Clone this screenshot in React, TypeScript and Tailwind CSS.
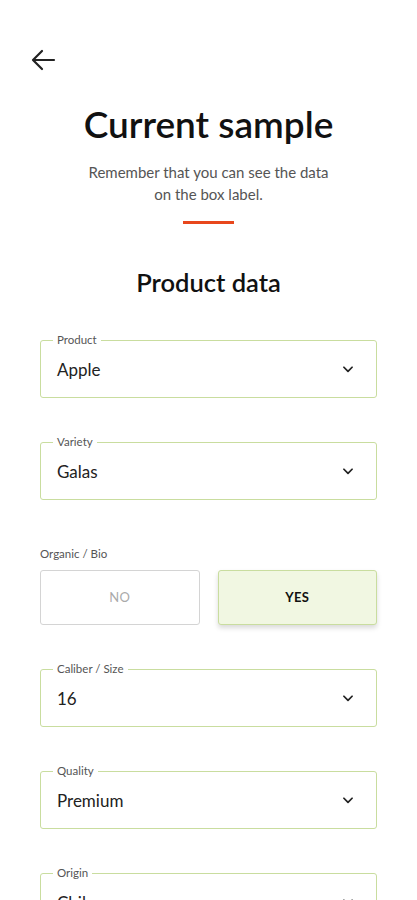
import React from "react";

const Chevron = () => (
  <svg width="14" height="14" viewBox="0 0 24 24" fill="none" stroke="#222" strokeWidth="3" strokeLinecap="round" strokeLinejoin="round">
    <path d="M5 9l7 7 7-7" />
  </svg>
);

const Field = ({ label, value }: { label: string; value: string }) => (
  <div className="relative h-[58px] rounded-[3px] border border-[#c9dd9f] flex items-center justify-between pl-4 pr-[21px]">
    <span className="absolute -top-[8px] left-[12px] bg-white px-[4px] text-[11.5px] leading-[14px] text-[#555]">{label}</span>
    <span className="text-[17px] text-[#222] pt-[2px]">{value}</span>
    <Chevron />
  </div>
);

export default function App() {
  return (
    <div className="min-h-screen bg-white" style={{ fontFamily: "Lato, 'Open Sans', sans-serif" }}>
      <div className="pt-[48px] pl-[31px]">
        <svg width="26" height="24" viewBox="0 0 26 24" fill="none" stroke="#222" strokeWidth="2.2" strokeLinecap="round" strokeLinejoin="round">
          <path d="M23 12H3M11 3l-9 9 9 9" />
        </svg>
      </div>
      <h1 className="mt-[31px] text-center text-[37px] leading-[42px] font-semibold text-[#111]">Current sample</h1>
      <p className="mt-[16px] text-center text-[15px] leading-[22px] text-[#555]">
        Remember that you can see the data
        <br />
        on the box label.
      </p>
      <div className="mx-auto mt-[16px] h-[3px] w-[51px] bg-[#e8471c]" />
      <h2 className="mt-[43px] text-center text-[25.5px] leading-[30px] font-semibold text-[#111]">Product data</h2>
      <div className="mx-[40px] mt-[43px] flex flex-col">
        <Field label="Product" value="Apple" />
        <div className="mt-[44px]">
          <Field label="Variety" value="Galas" />
        </div>
        <div className="mt-[47px] text-[11.5px] leading-[14px] text-[#555]">Organic / Bio</div>
        <div className="mt-[9px] flex gap-[18px]">
          <button className="h-[55px] flex-1 rounded-[3px] border border-[#d4d4d4] bg-white text-[13px] tracking-wide text-[#aaa]">NO</button>
          <button className="h-[55px] flex-1 rounded-[3px] border border-[#c9dd9f] bg-[#f1f7e2] text-[13px] font-bold tracking-wide text-[#111] shadow-[0_3px_5px_rgba(0,0,0,0.15)]">YES</button>
        </div>
        <div className="mt-[44px]">
          <Field label="Caliber / Size" value="16" />
        </div>
        <div className="mt-[44px]">
          <Field label="Quality" value="Premium" />
        </div>
        <div className="mt-[44px]">
          <Field label="Origin" value="Chile" />
        </div>
      </div>
    </div>
  );
}
